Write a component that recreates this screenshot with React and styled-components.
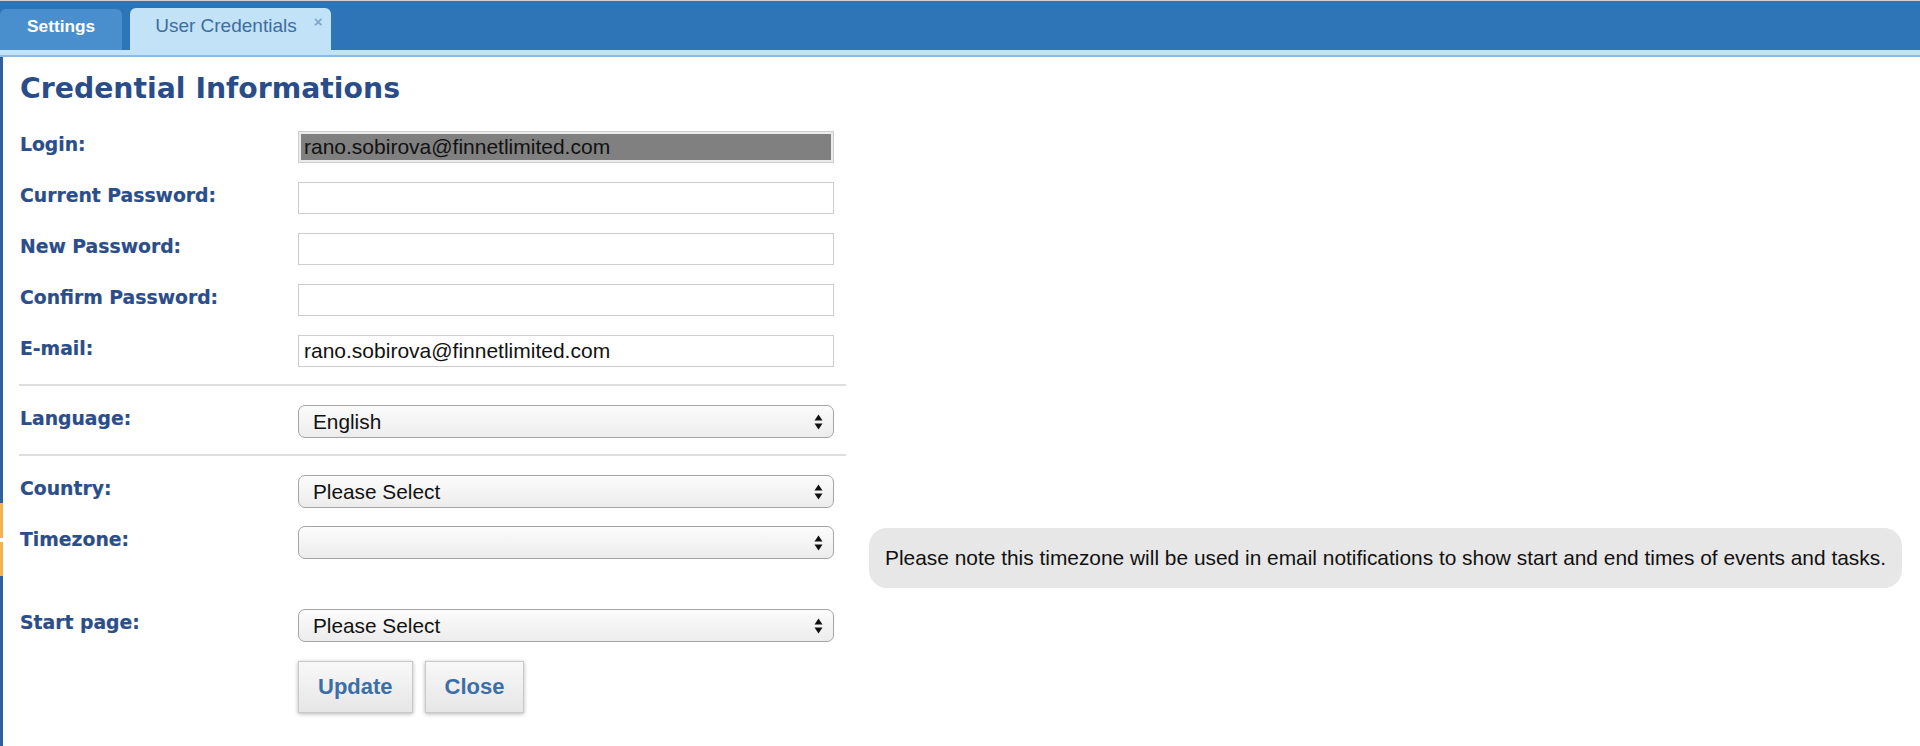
import React from "react";
import styled, { createGlobalStyle } from "styled-components";

const GlobalStyle = createGlobalStyle`
  html, body {
    margin: 0;
    padding: 0;
    background: #fff;
  }
  * {
    box-sizing: border-box;
  }
`;

const PageWrap = styled.div`
  min-height: 746px;
  display: flex;
  flex-direction: column;
  font-family: "Liberation Sans", Arial, sans-serif;
`;

const TabBar = styled.div`
  height: 50px;
  border-top: 1px solid #cfd3d8;
  background: #2e75b8;
  display: flex;
  align-items: flex-end;
  gap: 8px;
`;

const Tab = styled.div`
  height: ${(p) => (p.$active ? "42px" : "41px")};
  display: flex;
  align-items: center;
  gap: 17px;
  padding: ${(p) => (p.$active ? "0 9px 6px 25px" : "0 27px 6px 27px")};
  border-radius: 6px 6px 0 0;
  background: ${(p) => (p.$active ? "#c2e2f8" : "#4a8fcd")};
  color: ${(p) => (p.$active ? "#3e6d9f" : "#fff")};
  font-size: ${(p) => (p.$active ? "19px" : "17.3px")};
  font-weight: ${(p) => (p.$active ? "normal" : "bold")};
`;

const TabClose = styled.span`
  font-size: 15px;
  font-weight: bold;
  color: #7ea6ca;
  margin-top: -10px;
`;

const Strip = styled.div`
  height: 7px;
  background: #c2e2f8;
  border-bottom: 2px solid #8ebbe6;
`;

const Body = styled.div`
  flex: 1;
  display: flex;
`;

const Rail = styled.div`
  width: 3px;
  flex: none;
  background: linear-gradient(
    to bottom,
    #2e5f9e 0 446px,
    #f5b24e 446px 481px,
    #fff 481px 485px,
    #f5b24e 485px 519px,
    #2e5f9e 519px
  );
`;

const Main = styled.div`
  flex: 1;
  padding: 15px 19px 30px 17px;
`;

const Title = styled.h1`
  margin: 0 0 25px;
  font-family: "DejaVu Sans", Verdana, sans-serif;
  font-size: 28.3px;
  line-height: 34px;
  font-weight: bold;
  color: #2a4d8a;
`;

const Form = styled.div`
  display: flex;
  flex-direction: column;
  gap: 18px;
`;

const Row = styled.div`
  display: flex;
  align-items: flex-start;
  min-height: 33px;
`;

const Label = styled.div`
  width: 278px;
  flex: none;
  padding-top: 3px;
  font-family: "DejaVu Sans", Verdana, sans-serif;
  font-size: 18.8px;
  line-height: 22px;
  font-weight: bold;
  color: #2b4e8a;
  -webkit-text-stroke: 0.2px #2b4e8a;
`;

const TextInput = styled.input`
  width: 536px;
  height: 32px;
  padding: 0 5px;
  margin: 0;
  border: 1px solid #cdcdcd;
  border-radius: 0;
  outline: none;
  font-family: "Liberation Sans", Arial, sans-serif;
  font-size: 21px;
  color: #111;
  background: ${(p) => (p.$selected ? "#808080" : "#fff")};
  box-shadow: ${(p) => (p.$selected ? "inset 0 0 0 2px #ebebeb" : "none")};
`;

const Divider = styled.div`
  width: 827px;
  height: 2px;
  margin: -2px 0 1px -1px;
  background: #dedede;
`;

const SelectBox = styled.div`
  width: 536px;
  height: 33px;
  flex: none;
  display: flex;
  align-items: center;
  justify-content: space-between;
  padding: 0 10px 0 14px;
  border: 1px solid #a4a4a4;
  border-radius: 7px;
  background: linear-gradient(to bottom, #fcfcfc, #ececec);
  font-size: 20.8px;
  color: #111;
`;

const Note = styled.div`
  flex: 1;
  margin: 2px 0 3px 35px;
  height: 60px;
  display: flex;
  align-items: center;
  padding: 0 16px;
  border-radius: 18px;
  background: #e7e7e7;
  font-size: 20.9px;
  color: #111;
  white-space: nowrap;
`;

const Buttons = styled.div`
  display: flex;
  gap: 12px;
  padding-left: 278px;
  margin-top: 1px;
`;

const Button = styled.button`
  height: 52px;
  padding: 0 19px;
  margin: 0;
  border: 1px solid #c9c9c9;
  border-radius: 0;
  background: linear-gradient(to bottom, #f8f8f8, #e6e6e6);
  box-shadow: 0 1px 4px rgba(0, 0, 0, 0.3);
  font-family: "Liberation Sans", Arial, sans-serif;
  font-size: 22px;
  font-weight: bold;
  color: #3c6fa7;
  cursor: pointer;
`;

const Arrows = () => (
  <svg width="9" height="16" viewBox="0 0 9 16">
    <path d="M4.5 0.5 L8.5 6.5 L0.5 6.5 Z" fill="#111" />
    <path d="M4.5 15.5 L8.5 9.5 L0.5 9.5 Z" fill="#111" />
  </svg>
);

const Select = ({ value }) => (
  <SelectBox>
    <span>{value}</span>
    <Arrows />
  </SelectBox>
);

const fields = [
  { label: "Login:", value: "rano.sobirova@finnetlimited.com", selected: true },
  { label: "Current Password:", value: "" },
  { label: "New Password:", value: "" },
  { label: "Confirm Password:", value: "" },
  { label: "E-mail:", value: "rano.sobirova@finnetlimited.com" },
];

const App = () => {
  return (
    <>
      <GlobalStyle />
      <PageWrap>
        <TabBar>
          <Tab>Settings</Tab>
          <Tab $active>
            User Credentials
            <TabClose>×</TabClose>
          </Tab>
        </TabBar>
        <Strip />
        <Body>
          <Rail />
          <Main>
            <Title>Credential Informations</Title>
            <Form>
              {fields.map((f) => (
                <Row key={f.label}>
                  <Label>{f.label}</Label>
                  <TextInput
                    type="text"
                    readOnly
                    defaultValue={f.value}
                    $selected={f.selected}
                  />
                </Row>
              ))}
              <Divider />
              <Row>
                <Label>Language:</Label>
                <Select value="English" />
              </Row>
              <Divider />
              <Row>
                <Label>Country:</Label>
                <Select value="Please Select" />
              </Row>
              <Row>
                <Label>Timezone:</Label>
                <Select value="" />
                <Note>
                  Please note this timezone will be used in email notifications
                  to show start and end times of events and tasks.
                </Note>
              </Row>
              <Row>
                <Label>Start page:</Label>
                <Select value="Please Select" />
              </Row>
              <Buttons>
                <Button>Update</Button>
                <Button>Close</Button>
              </Buttons>
            </Form>
          </Main>
        </Body>
      </PageWrap>
    </>
  );
};

export default App;
